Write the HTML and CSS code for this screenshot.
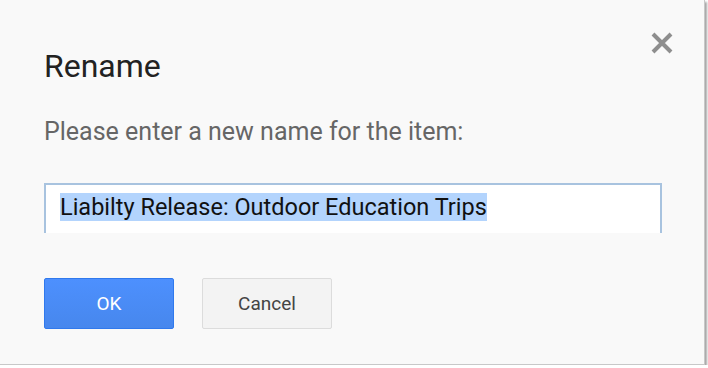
FILE: index.html
```html
<!DOCTYPE html>
<html lang="en">
<head>
    <meta charset="UTF-8">
    <meta name="viewport" content="width=device-width,initial-scale=1">
    <title>Rename</title>
    <link rel="stylesheet" href="styles.css">
</head>
<body>
<div class="dialog">
    <button class="close" aria-label="Close">
        <svg width="24" height="22" viewBox="0 0 24 22">
            <path d="M3 2 L21 20 M21 2 L3 20" stroke="#8e8e8e" stroke-width="4"/>
        </svg>
    </button>
    <h1 class="title">Rename</h1>
    <p class="prompt">Please enter a new name for the item:</p>
    <div class="field">
        <div class="input"><span class="selected">Liabilty Release: Outdoor Education Trips</span></div>
    </div>
    <div class="buttons">
        <button class="btn btn-primary">OK</button>
        <button class="btn">Cancel</button>
    </div>
</div>
</body>
</html>
```

FILE: styles.css
```css
* {
    margin: 0;
    padding: 0;
    box-sizing: border-box;
}

body {
    background: #fff;
    font-family: Roboto, "Liberation Sans", sans-serif;
}

.dialog {
    position: relative;
    width: 705px;
    height: 365px;
    background: #f9f9f9;
    border-right: 1px solid #c8c8c8;
    border-bottom: 1px solid #c8c8c8;
    box-shadow: 2px 2px 2px rgba(0, 0, 0, 0.35);
    padding: 46px 44px 0 44px;
}

.close {
    position: absolute;
    top: 32px;
    right: 30px;
    border: none;
    background: none;
    cursor: pointer;
    display: flex;
}

.title {
    font-size: 32px;
    font-weight: 400;
    color: #222;
    line-height: 40px;
}

.prompt {
    margin-top: 31px;
    font-size: 25px;
    color: #666;
    line-height: 30px;
}

.field {
    margin-top: 36px;
    width: 618px;
    height: 50px;
    overflow: hidden;
}

.input {
    height: 60px;
    background: #fff;
    border: 2px solid #a8c3df;
    padding: 9px 14px;
    font-size: 23.5px;
    line-height: 27px;
    color: #111;
}

.selected {
    background: #b3d4fd;
}

.buttons {
    display: flex;
    gap: 28px;
    margin-top: 45px;
}

.btn {
    width: 130px;
    height: 51px;
    border: 1px solid #dcdcdc;
    border-radius: 2px;
    background: #f3f3f3;
    color: #444;
    font-family: Roboto, "Liberation Sans", sans-serif;
    font-size: 19px;
    font-weight: 400;
}

.btn-primary {
    background: linear-gradient(#4d90fe, #4787ed);
    border-color: #3079ed;
    color: #fff;
}
```
